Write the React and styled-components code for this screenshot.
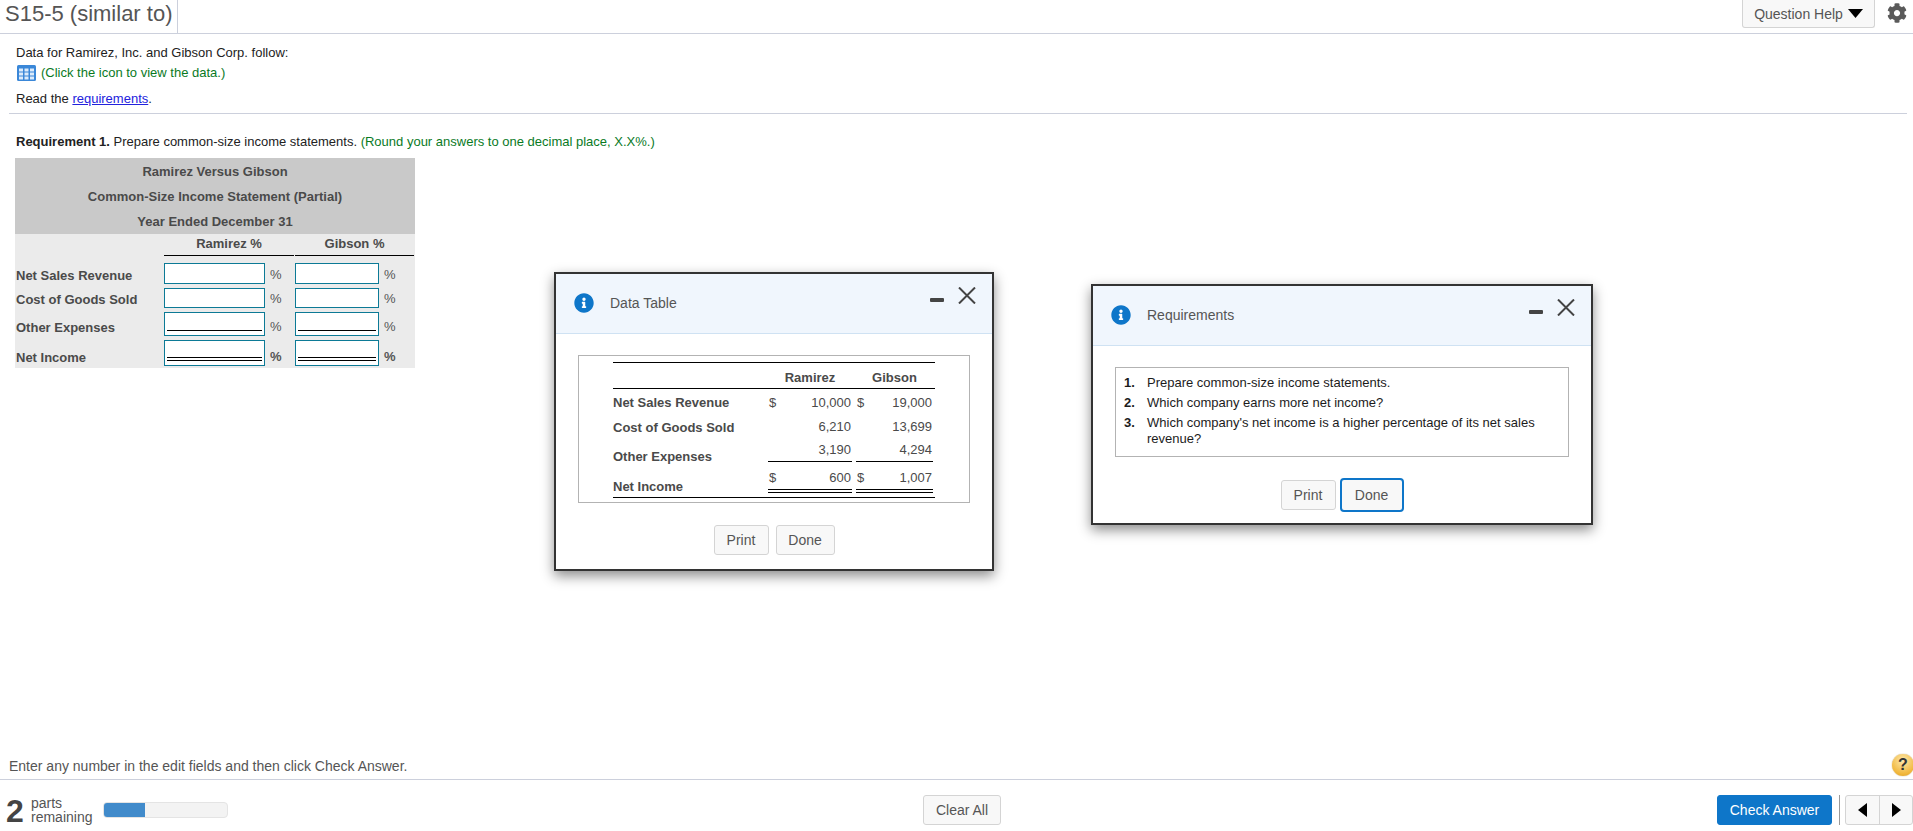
import React from 'react';
import styled, { createGlobalStyle } from 'styled-components';
import { FaCog, FaInfoCircle } from 'react-icons/fa';

const GlobalStyle = createGlobalStyle`
  html, body {
    margin: 0;
    padding: 0;
    background: #fff;
  }
  body {
    font-family: "Liberation Sans", Arial, sans-serif;
    font-size: 13px;
    color: #222;
  }
`;

const Page = styled.div`
  position: relative;
  width: 1913px;
  height: 831px;
  overflow: hidden;
  display: flex;
  flex-direction: column;
`;

const TopBar = styled.header`
  height: 33px;
  flex: none;
  display: flex;
  justify-content: space-between;
  border-bottom: 1px solid #ccd0dc;
`;

const Title = styled.h1`
  margin: 0;
  width: 172px;
  padding-left: 5px;
  border-right: 1px solid #ccd0dc;
  font-size: 22px;
  font-weight: normal;
  line-height: 27px;
  white-space: nowrap;
  color: #555;
`;

const TopActions = styled.div`
  display: flex;
  align-items: flex-start;
  gap: 12px;
  padding-right: 6px;
  color: #555;
`;

const Btn = styled.button`
  font-family: inherit;
  font-size: ${(p) => p.$size || 14}px;
  color: #555;
  background: #f8f8f8;
  border: 1px solid #d4d4d4;
  border-radius: 3px;
  height: ${(p) => p.$h || 30}px;
  width: ${(p) => p.$w}px;
  padding: 0;
  display: inline-flex;
  align-items: center;
  justify-content: center;
  gap: 5px;
`;

const HelpBtn = styled(Btn)`
  border-top: none;
  border-radius: 0 0 3px 3px;
`;

const DoneFocused = styled(Btn)`
  box-sizing: border-box;
  height: 34px;
  border: 2px solid #0e76c9;
  border-radius: 4px;
  background: #f8f8f8;
`;

const Gear = styled.span`
  display: flex;
  padding-top: 3px;
  font-size: 20px;
  color: #5a5a5a;
`;

const Main = styled.main`
  flex: 1;
  padding: 11px 6px 0 9px;
  color: #222;
`;

const Line = styled.div`
  padding-left: 7px;
  line-height: 15px;
  margin-top: ${(p) => p.$top || 0}px;
`;

const DataHint = styled(Line)`
  display: flex;
  align-items: flex-start;
  gap: 5px;
  padding-left: 8px;
  color: #0a7a1f;
`;

const Link = styled.a`
  color: #2222dd;
  text-decoration: underline;
`;

const Rule = styled.hr`
  margin: 7px 0 0;
  border: none;
  border-top: 1px solid #ccd0dc;
`;

const Green = styled.span`
  color: #0a7a1f;
`;

const Sheet = styled.div`
  width: 400px;
  margin: 9px 0 0 6px;
  background: #ebebeb;
  color: #4a4a4a;
  font-weight: bold;
  padding-bottom: 2px;
`;

const SheetTitle = styled.div`
  background: #c9c9c9;
  padding-top: 1px;
`;

const SheetTitleRow = styled.div`
  height: 25px;
  line-height: 25px;
  text-align: center;
`;

const SheetGrid = styled.div`
  display: grid;
  grid-template-columns: 149px 131px 120px;
  row-gap: 4px;
`;

const SheetHead = styled.div`
  height: 21px;
  line-height: 20px;
  text-align: center;
  border-bottom: 1px solid #000;
  margin: 0 1px 3px 0;
`;

const SheetLabel = styled.div`
  align-self: end;
  line-height: 16px;
  padding-left: 1px;
`;

const FieldCell = styled.div`
  display: flex;
  align-items: flex-end;
  gap: 5px;
  font-weight: ${(p) => (p.$strong ? 'bold' : 'normal')};
`;

const Field = styled.div`
  position: relative;
  box-sizing: border-box;
  flex: none;
  width: ${(p) => p.$w}px;
  height: ${(p) => p.$h}px;
  background: #fff;
  border: 1px solid #0c7a96;
  &::after {
    content: '';
    display: ${(p) => (p.$rule ? 'block' : 'none')};
    position: absolute;
    left: 2px;
    right: 2px;
    bottom: 4px;
    border-bottom: ${(p) => (p.$rule === 'double' ? '4px double #000' : '1px solid #000')};
  }
`;

const Percent = styled.span`
  line-height: 18px;
  color: #555;
`;

const Hint = styled.div`
  flex: none;
  height: 24px;
  padding-left: 9px;
  font-size: 14px;
  line-height: 23px;
  color: #555;
`;

const Footer = styled.footer`
  flex: none;
  height: 52px;
  border-top: 1px solid #ccd0dc;
  display: grid;
  grid-template-columns: 923px 78px 1fr;
  align-items: start;
  padding-top: 15px;
  box-sizing: border-box;
`;

const Parts = styled.div`
  display: flex;
  align-items: flex-start;
  padding-left: 6px;
  color: #555;
`;

const PartsCount = styled.div`
  font-size: 32px;
  font-weight: bold;
  line-height: 32px;
  color: #444;
  width: 25px;
`;

const PartsText = styled.div`
  font-size: 14px;
  line-height: 14px;
  width: 72px;
  margin-top: 1px;
`;

const Track = styled.div`
  width: 125px;
  height: 16px;
  margin-top: 7px;
  border-radius: 4px;
  background: #f3f3f3;
  border: 1px solid #e4e4e4;
  box-sizing: border-box;
  overflow: hidden;
`;

const Fill = styled.div`
  height: 100%;
  background: #418bcb;
`;

const FooterRight = styled.div`
  display: flex;
  justify-content: flex-end;
  align-items: stretch;
`;

const CheckBtn = styled(Btn)`
  background: #0e76c9;
  border-color: #0e76c9;
  color: #fff;
  margin-right: 7px;
`;

const NavGroup = styled.div`
  display: flex;
  border: 1px solid #d4d4d4;
  border-radius: 3px;
  background: #f8f8f8;
  margin-left: 5px;
  box-sizing: border-box;
  height: 30px;
`;

const NavDivider = styled.div`
  width: 1px;
  height: 30px;
  background: #999;
`;

const NavBtn = styled.div`
  width: 33px;
  box-sizing: border-box;
  display: flex;
  align-items: center;
  justify-content: center;
  & + & {
    border-left: 1px solid #d4d4d4;
  }
`;

const HelpBadge = styled.div`
  position: absolute;
  left: 1892px;
  top: 754px;
  width: 22px;
  height: 22px;
  border-radius: 50%;
  background: radial-gradient(circle at 50% 30%, #fde9ae, #f1b73c 70%, #d99a20);
  color: #333;
  font-size: 16px;
  font-weight: bold;
  line-height: 22px;
  text-align: center;
  box-shadow: 0 0 1px #a87a20;
`;

const Win = styled.section`
  position: absolute;
  box-sizing: border-box;
  left: ${(p) => p.$x}px;
  top: ${(p) => p.$y}px;
  width: ${(p) => p.$w}px;
  height: ${(p) => p.$h}px;
  background: #fff;
  border: 2px solid #333;
  box-shadow: 0 5px 12px rgba(0, 0, 0, 0.45);
`;

const WinHead = styled.div`
  position: relative;
  box-sizing: border-box;
  height: 60px;
  background: #f0f6fd;
  border-bottom: 1px solid #cfe2f3;
  display: flex;
  align-items: center;
  padding: 0 0 2px 18px;
  font-size: 14px;
  color: #555;
`;

const InfoIcon = styled.span`
  display: flex;
  font-size: 20px;
  color: #0e76c9;
  background: linear-gradient(#fff, #fff) center / 10px 14px no-repeat;
  border-radius: 50%;
  margin-right: 16px;
`;

const WinControls = styled.div`
  position: absolute;
  right: 16px;
  top: 13px;
  display: flex;
  align-items: flex-start;
  gap: 14px;
`;

const MinusMark = styled.div`
  width: 14px;
  height: 4px;
  margin-top: 11px;
  border-radius: 1px;
  background: #444;
`;

const WinBody = styled.div`
  padding: 21px 22px 0;
`;

const Framed = styled.div`
  box-sizing: border-box;
  border: 1px solid #b3b3b3;
  height: ${(p) => p.$h}px;
  padding: ${(p) => p.$pad};
`;

const DataGrid = styled.div`
  width: 322px;
  display: grid;
  grid-template-columns: 155px 88px 79px;
  border-top: 1px solid #000;
  color: #4a4a4a;
`;

const DataHead = styled.div`
  height: 25px;
  line-height: 30px;
  font-weight: bold;
  text-align: center;
  border-bottom: 1px solid #000;
  padding-right: ${(p) => p.$pr || 0}px;
`;

const DataLabel = styled.div`
  height: ${(p) => p.$h}px;
  font-weight: bold;
  display: flex;
  align-items: flex-end;
  line-height: 16px;
  padding-bottom: ${(p) => p.$pb || 0}px;
  box-sizing: border-box;
`;

const Amount = styled.div`
  display: flex;
  justify-content: space-between;
  align-self: start;
  box-sizing: border-box;
  margin-right: ${(p) => p.$mr || 2}px;
  height: ${(p) => p.$h}px;
  line-height: 16px;
  padding: ${(p) => p.$pt || 0}px 1px 0 1px;
  border-bottom: ${(p) =>
    p.$rule === 'double' ? '4px double #000' : p.$rule ? '1px solid #000' : 'none'};
`;

const BottomRule = styled.div`
  grid-column: 1 / -1;
  border-top: 1px solid #000;
`;

const WinButtons = styled.div`
  display: flex;
  justify-content: center;
  align-items: center;
  gap: ${(p) => p.$gap}px;
  margin-top: ${(p) => p.$top}px;
`;

const ReqList = styled.ol`
  list-style: none;
  margin: 0;
  padding: 0;
  color: #1c1c1c;
`;

const ReqItem = styled.li`
  display: grid;
  grid-template-columns: 23px 1fr;
  line-height: 16px;
  margin-bottom: 4px;
`;

const ReqNum = styled.span`
  font-weight: bold;
`;

const sheetRows = [
  { label: 'Net Sales Revenue', h: 21 },
  { label: 'Cost of Goods Sold', h: 20 },
  { label: 'Other Expenses', h: 24, rule: 'single' },
  { label: 'Net Income', h: 26, rule: 'double', strong: true },
];

const requirements = [
  'Prepare common-size income statements.',
  'Which company earns more net income?',
  "Which company's net income is a higher percentage of its net sales revenue?",
];

const Times = () => (
  <svg width="18" height="17" viewBox="0 0 18 17">
    <path d="M1 0.5 L17 16.5 M17 0.5 L1 16.5" stroke="#444" strokeWidth="2" fill="none" />
  </svg>
);

const Caret = ({ dir }) => {
  const pts = { down: '0,0 15,0 7.5,9', left: '9,0 9,14 0,7', right: '0,0 0,14 9,7' };
  const size = dir === 'down' ? [15, 9] : [9, 14];
  return (
    <svg width={size[0]} height={size[1]} viewBox={`0 0 ${size[0]} ${size[1]}`}>
      <polygon points={pts[dir]} fill="#000" />
    </svg>
  );
};

const TableIcon = () => (
  <svg width="19" height="16" viewBox="0 0 19 16">
    <rect x="0" y="0" width="19" height="16" rx="1.5" fill="#3a87d8" />
    <g fill="#dcebfb">
      {[3.5, 7.5, 11.5].map((y) =>
        [2, 7.5, 13].map((x) => <rect key={`${x}-${y}`} x={x} y={y} width="4" height="3" />)
      )}
    </g>
  </svg>
);

const WinHeader = ({ title }) => (
  <WinHead>
    <InfoIcon><FaInfoCircle /></InfoIcon>
    {title}
    <WinControls>
      <MinusMark />
      <Times />
    </WinControls>
  </WinHead>
);

export default function App() {
  return (
    <Page>
      <GlobalStyle />
      <TopBar>
        <Title>S15-5 (similar to)</Title>
        <TopActions>
          <HelpBtn $w={133} $h={28}>Question Help <Caret dir="down" /></HelpBtn>
          <Gear><FaCog /></Gear>
        </TopActions>
      </TopBar>

      <Main>
        <Line>Data for Ramirez, Inc. and Gibson Corp. follow:</Line>
        <DataHint $top={5}>
          <TableIcon />
          (Click the icon to view the data.)
        </DataHint>
        <Line $top={10}>Read the <Link>requirements</Link>.</Line>
        <Rule />
        <Line $top={20}>
          <b>Requirement 1.</b> Prepare common-size income statements.{' '}
          <Green>(Round your answers to one decimal place, X.X%.)</Green>
        </Line>

        <Sheet>
          <SheetTitle>
            <SheetTitleRow>Ramirez Versus Gibson</SheetTitleRow>
            <SheetTitleRow>Common-Size Income Statement (Partial)</SheetTitleRow>
            <SheetTitleRow>Year Ended December 31</SheetTitleRow>
          </SheetTitle>
          <SheetGrid>
            <div />
            <SheetHead>Ramirez %</SheetHead>
            <SheetHead>Gibson %</SheetHead>
            {sheetRows.map((row) => (
              <React.Fragment key={row.label}>
                <SheetLabel>{row.label}</SheetLabel>
                <FieldCell $strong={row.strong}>
                  <Field $w={101} $h={row.h} $rule={row.rule} />
                  <Percent>%</Percent>
                </FieldCell>
                <FieldCell $strong={row.strong}>
                  <Field $w={84} $h={row.h} $rule={row.rule} />
                  <Percent>%</Percent>
                </FieldCell>
              </React.Fragment>
            ))}
          </SheetGrid>
        </Sheet>
      </Main>

      <Hint>Enter any number in the edit fields and then click Check Answer.</Hint>
      <HelpBadge>?</HelpBadge>
      <Footer>
        <Parts>
          <PartsCount>2</PartsCount>
          <PartsText>parts<br />remaining</PartsText>
          <Track><Fill style={{ width: `${(42 / 125) * 100}%` }} /></Track>
        </Parts>
        <Btn $w={78}>Clear All</Btn>
        <FooterRight>
          <CheckBtn $w={115}>Check Answer</CheckBtn>
          <NavDivider />
          <NavGroup>
            <NavBtn><Caret dir="left" /></NavBtn>
            <NavBtn><Caret dir="right" /></NavBtn>
          </NavGroup>
        </FooterRight>
      </Footer>

      <Win $x={554} $y={272} $w={440} $h={299}>
        <WinHeader title="Data Table" />
        <WinBody>
          <Framed $h={148} $pad="6px 0 0 34px">
            <DataGrid>
              <DataHead />
              <DataHead $pr={4}>Ramirez</DataHead>
              <DataHead $pr={2}>Gibson</DataHead>

              <DataLabel $h={28} $pb={6}>Net Sales Revenue</DataLabel>
              <Amount $h={28} $pt={6} $mr={4}><span>$</span><span>10,000</span></Amount>
              <Amount $h={28} $pt={6}><span>$</span><span>19,000</span></Amount>

              <DataLabel $h={25} $pb={6}>Cost of Goods Sold</DataLabel>
              <Amount $h={25} $pt={2} $mr={4}><span /><span>6,210</span></Amount>
              <Amount $h={25} $pt={2}><span /><span>13,699</span></Amount>

              <DataLabel $h={23}>Other Expenses</DataLabel>
              <Amount $h={20} $rule="single" $mr={4}><span /><span>3,190</span></Amount>
              <Amount $h={20} $rule="single"><span /><span>4,294</span></Amount>

              <DataLabel $h={32} $pb={2}>Net Income</DataLabel>
              <Amount $h={28} $pt={5} $rule="double" $mr={4}><span>$</span><span>600</span></Amount>
              <Amount $h={28} $pt={5} $rule="double"><span>$</span><span>1,007</span></Amount>

              <BottomRule />
            </DataGrid>
          </Framed>
          <WinButtons $gap={7} $top={22}>
            <Btn $w={55}>Print</Btn>
            <Btn $w={59}>Done</Btn>
          </WinButtons>
        </WinBody>
      </Win>

      <Win $x={1091} $y={284} $w={502} $h={241}>
        <WinHeader title="Requirements" />
        <WinBody>
          <Framed $h={90} $pad="7px 22px 0 8px">
            <ReqList>
              {requirements.map((text, i) => (
                <ReqItem key={text}>
                  <ReqNum>{i + 1}.</ReqNum>
                  <span>{text}</span>
                </ReqItem>
              ))}
            </ReqList>
          </Framed>
          <WinButtons $gap={4} $top={21}>
            <Btn $w={55}>Print</Btn>
            <DoneFocused $w={64}>Done</DoneFocused>
          </WinButtons>
        </WinBody>
      </Win>
    </Page>
  );
}
